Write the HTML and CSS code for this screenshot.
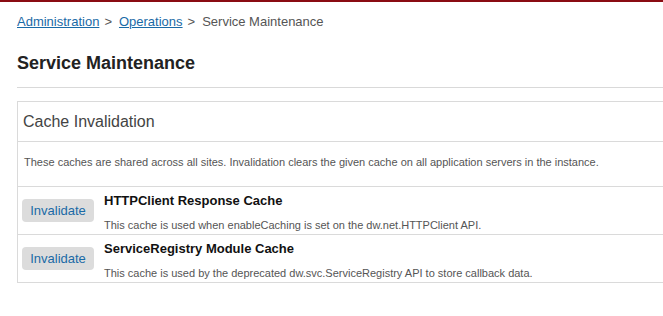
FILE: index.html
```html
<!DOCTYPE html>
<html>
<head>
<meta charset="utf-8">
<link rel="stylesheet" href="styles.css">
</head>
<body>
<div class="topbar"></div>
<div class="page">
  <nav class="crumbs">
    <a href="#">Administration</a><span class="sep">&gt;</span><a href="#">Operations</a><span class="sep">&gt;</span><span class="current">Service Maintenance</span>
  </nav>
  <h1 class="title">Service Maintenance</h1>
  <div class="rule"></div>
  <section class="panel">
    <div class="panel-head">Cache Invalidation</div>
    <div class="panel-desc">These caches are shared across all sites. Invalidation clears the given cache on all application servers in the instance.</div>
    <div class="row">
      <button class="btn">Invalidate</button>
      <div class="info">
        <div class="name">HTTPClient Response Cache</div>
        <div class="desc">This cache is used when enableCaching is set on the dw.net.HTTPClient API.</div>
      </div>
    </div>
    <div class="row">
      <button class="btn">Invalidate</button>
      <div class="info">
        <div class="name">ServiceRegistry Module Cache</div>
        <div class="desc">This cache is used by the deprecated dw.svc.ServiceRegistry API to store callback data.</div>
      </div>
    </div>
  </section>
</div>
</body>
</html>
```
FILE: styles.css
```css
html, body {
  margin: 0;
  padding: 0;
  background: #fff;
  font-family: "Liberation Sans", Arial, sans-serif;
}
.topbar {
  height: 2px;
  background: #8a0c13;
}
.page {
  padding-left: 17px;
  overflow: hidden;
}
.crumbs {
  margin-top: 12px;
  font-size: 13px;
  line-height: 16px;
  color: #555;
}
.crumbs a {
  color: #1a6aa6;
  text-decoration: underline;
}
.sep {
  margin: 0 7px 0 5px;
  color: #555;
}
.title {
  margin: 22px 0 0;
  font-size: 18px;
  line-height: 22px;
  font-weight: bold;
  color: #222;
}
.rule {
  margin-top: 13px;
  height: 1px;
  background: #d9d9d9;
  margin-right: -40px;
}
.panel {
  margin-top: 13px;
  border: 1px solid #dadada;
  margin-right: -40px;
}
.panel-head {
  height: 39px;
  padding-left: 5px;
  font-size: 16px;
  line-height: 39px;
  color: #444;
  border-bottom: 1px solid #dadada;
}
.panel-desc {
  height: 44px;
  padding-left: 6px;
  font-size: 11px;
  line-height: 40px;
  color: #555;
}
.row {
  display: flex;
  align-items: center;
  border-top: 1px solid #dadada;
  padding-left: 4px;
  gap: 10px;
}
.info {
  padding: 6px 0 2px;
}
.btn {
  width: 72px;
  height: 23px;
  padding: 0;
  border: none;
  border-radius: 4px;
  background: #dcdcdc;
  color: #1a6aa6;
  font-family: "Liberation Sans", Arial, sans-serif;
  font-size: 13px;
}
.name {
  font-size: 13px;
  line-height: 16px;
  font-weight: bold;
  color: #111;
}
.desc {
  margin-top: 9px;
  font-size: 11px;
  line-height: 14px;
  color: #555;
}
```
